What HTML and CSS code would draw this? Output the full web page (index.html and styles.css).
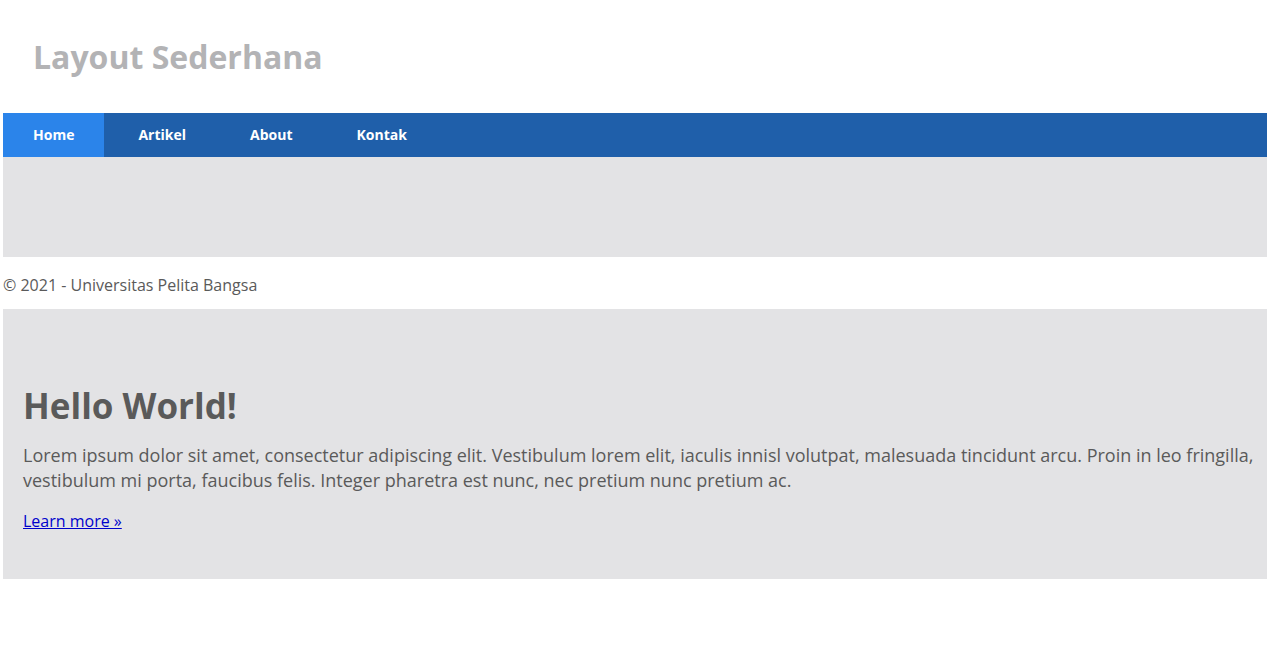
FILE: index.html
```html
<!DOCTYPE html>
<html lang="id">
<head>
<meta charset="utf-8">
<title>Layout Sederhana</title>
<link rel="stylesheet" href="styles.css">
</head>
<body>
<div class="container">
  <header class="site-header">
    <h1 class="site-title">Layout Sederhana</h1>
  </header>
  <nav class="main-nav">
    <a href="#" class="nav-link active">Home</a>
    <a href="#" class="nav-link">Artikel</a>
    <a href="#" class="nav-link">About</a>
    <a href="#" class="nav-link">Kontak</a>
  </nav>
  <div class="banner"></div>
  <footer class="site-footer">
    <p>&copy; 2021 - Universitas Pelita Bangsa</p>
  </footer>
  <section class="hero">
    <h2 class="hero-title">Hello World!</h2>
    <p class="hero-text">Lorem ipsum dolor sit amet, consectetur adipiscing elit. Vestibulum lorem elit, iaculis innisl volutpat, malesuada tincidunt arcu. Proin in leo fringilla, vestibulum mi porta, faucibus felis. Integer pharetra est nunc, nec pretium nunc pretium ac.</p>
    <p class="hero-link"><a href="#">Learn more &raquo;</a></p>
  </section>
</div>
</body>
</html>
```

FILE: styles.css
```css
html, body {
  margin: 0;
  padding: 0;
  background: #ffffff;
}

body {
  font-family: "Open Sans", "Noto Sans", sans-serif;
  color: #5a5a5a;
}

.container {
  margin-left: 3px;
}

.site-header {
  height: 113px;
  display: flex;
  align-items: center;
  padding-left: 30px;
}

.site-title {
  margin: 0;
  font-size: 32px;
  font-weight: 700;
  color: #b3b3b5;
  line-height: 40px;
}

.main-nav {
  background: #1f5faa;
  height: 44px;
  font-size: 0;
}

.nav-link {
  display: inline-block;
  font-size: 14px;
  font-weight: 700;
  color: #ffffff;
  text-decoration: none;
  line-height: 44px;
  padding: 0 30px;
  margin-right: 4px;
}

.nav-link.active {
  background: #2b84ea;
}

.banner {
  height: 100px;
  background: #e3e3e5;
}

.site-footer p {
  margin: 0;
  padding: 17px 0 13px;
  font-size: 16px;
  line-height: 22px;
  color: #5a5a5a;
}

.hero {
  background: #e3e3e5;
  padding: 75px 8px 47px 20px;
}

.hero-title {
  margin: 0;
  font-size: 35px;
  font-weight: 700;
  line-height: 44px;
  color: #5a5a5a;
}

.hero-text {
  margin: 15px 0 0;
  font-size: 18px;
  line-height: 25px;
  color: #5a5a5a;
}

.hero-link {
  margin: 17px 0 0;
  font-size: 16px;
  line-height: 22px;
}

.hero-link a {
  color: #0000cc;
}
```
